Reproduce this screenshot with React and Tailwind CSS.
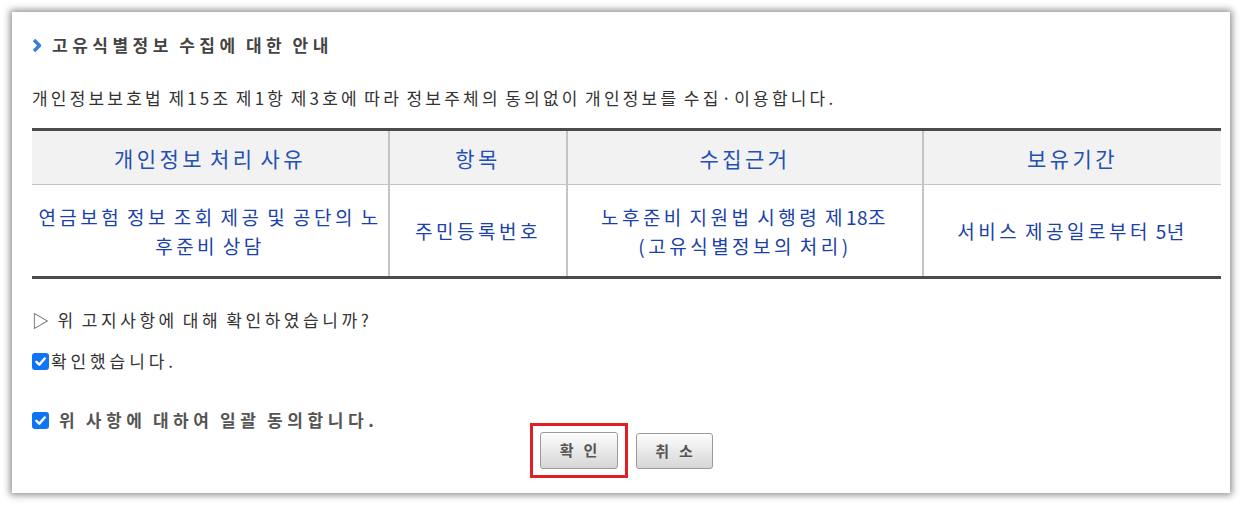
import React from "react";

const KR = { fontFamily: '"Noto Sans CJK KR", "Noto Sans", sans-serif' };

function Check() {
  return (
    <span className="inline-flex h-[17px] w-[17px] shrink-0 items-center justify-center rounded-[3px] bg-[#0f74f5]">
      <svg width="13" height="13" viewBox="0 0 12 12" fill="none">
        <path d="M2.2 6.3 L4.9 8.9 L9.9 3.2" stroke="#fff" strokeWidth="2.2" strokeLinecap="round" strokeLinejoin="round" />
      </svg>
    </span>
  );
}

const Num = ({ children }) => <span className="tracking-[0.5px]">{children}</span>;

export default function App() {
  return (
    <div className="min-h-[506px] w-[1243px] bg-white pl-[12px] pt-[12px]" style={KR}>
      <div className="h-[481px] w-[1218px] bg-white pl-[20px] pr-[9px] pt-[23px] shadow-[0_0_7px_2px_rgba(0,0,0,0.45)]">
        {/* Title */}
        <div className="flex h-[20px] items-center">
          <svg width="10" height="15" viewBox="0 0 10 15">
            <path d="M2 2 L7.5 7.5 L2 13" stroke="#3a7de0" strokeWidth="3.4" fill="none" strokeLinejoin="round" />
          </svg>
          <span className="ml-[10px] text-[17px] leading-[20px] font-semibold tracking-[4.5px] [word-spacing:-2px] text-[#444]">
            고유식별정보 수집에 대한 안내
          </span>
        </div>

        {/* Description */}
        <p className="mt-[33px] text-[17px] leading-[20px] tracking-[3.2px] [word-spacing:-2.5px] text-[#333]">
          개인정보보호법 제15조 제1항 제3호에 따라 정보주체의 동의없이 개인정보를 수집·이용합니다.
        </p>

        {/* Table */}
        <table className="mt-[20px] w-[1189px] table-fixed border-collapse border-t-[3px] border-b-[3px] border-t-[#4b4b4b] border-b-[#4b4b4b] text-center">
          <colgroup>
            <col className="w-[357px]" />
            <col className="w-[178px]" />
            <col className="w-[356px]" />
            <col className="w-[298px]" />
          </colgroup>
          <thead>
            <tr className="h-[55px] bg-[#f2f2f2]">
              {["개인정보 처리 사유", "항목", "수집근거", "보유기간"].map((h, i) => (
                <th
                  key={h}
                  className={`border-b border-[#c4c4c4] p-0 text-[21px] font-normal leading-[24px] tracking-[3.4px] [word-spacing:-3px] text-[#2450b4] ${i > 0 ? "border-l-2 border-l-[#c4c4c4]" : ""}`}
                >
                  {h}
                </th>
              ))}
            </tr>
          </thead>
          <tbody>
            <tr className="h-[93px] text-[19px] leading-[29px] tracking-[3.5px] [word-spacing:-3px] text-[#1a41a8]">
              <td className="p-0 whitespace-nowrap">
                연금보험 정보 조회 제공 및 공단의 노<br />후준비 상담
              </td>
              <td className="border-l-2 border-l-[#c4c4c4] p-0 whitespace-nowrap">주민등록번호</td>
              <td className="border-l-2 border-l-[#c4c4c4] p-0 whitespace-nowrap">
                노후준비 지원법 시행령 제<Num>18</Num>조<br />(고유식별정보의 처리)
              </td>
              <td className="border-l-2 border-l-[#c4c4c4] p-0 whitespace-nowrap">
                서비스 제공일로부터 <Num>5</Num>년
              </td>
            </tr>
          </tbody>
        </table>

        {/* Question */}
        <p className="mt-[31px] text-[17px] leading-[20px] tracking-[3.6px] [word-spacing:-2.5px] text-[#333]">
          ▷ 위 고지사항에 대해 확인하였습니까?
        </p>

        <div className="mt-[22px] flex h-[18px] items-center">
          <Check />
          <span className="ml-[2px] text-[17px] leading-[20px] tracking-[3.9px] text-[#333]">확인했습니다.</span>
        </div>

        <div className="mt-[41px] flex h-[18px] items-center">
          <Check />
          <span className="ml-[10px] text-[17px] leading-[20px] font-semibold tracking-[4.6px] [word-spacing:-2px] text-[#555]">
            위 사항에 대하여 일괄 동의합니다.
          </span>
        </div>

        {/* Buttons */}
        <div className="-mt-[6px] flex items-start justify-center gap-[8px] pr-[11px]">
          <div className="border-[3px] border-[#e41e25] px-[7px] py-[6px]">
            <button className="flex h-[37px] w-[78px] items-center justify-center rounded-[3px] border border-[#9a9a9a] bg-gradient-to-b from-[#fdfdfd] to-[#d6d6d6] pl-[10px] text-[15px] font-bold tracking-[10px] text-[#555] shadow-[inset_0_1px_0_#fff]">
              확인
            </button>
          </div>
          <button className="mt-[10px] flex h-[36px] w-[77px] items-center justify-center rounded-[3px] border border-[#9a9a9a] bg-gradient-to-b from-[#fdfdfd] to-[#d6d6d6] pl-[10px] text-[15px] font-bold tracking-[10px] text-[#555] shadow-[inset_0_1px_0_#fff]">
            취소
          </button>
        </div>
      </div>
    </div>
  );
}
